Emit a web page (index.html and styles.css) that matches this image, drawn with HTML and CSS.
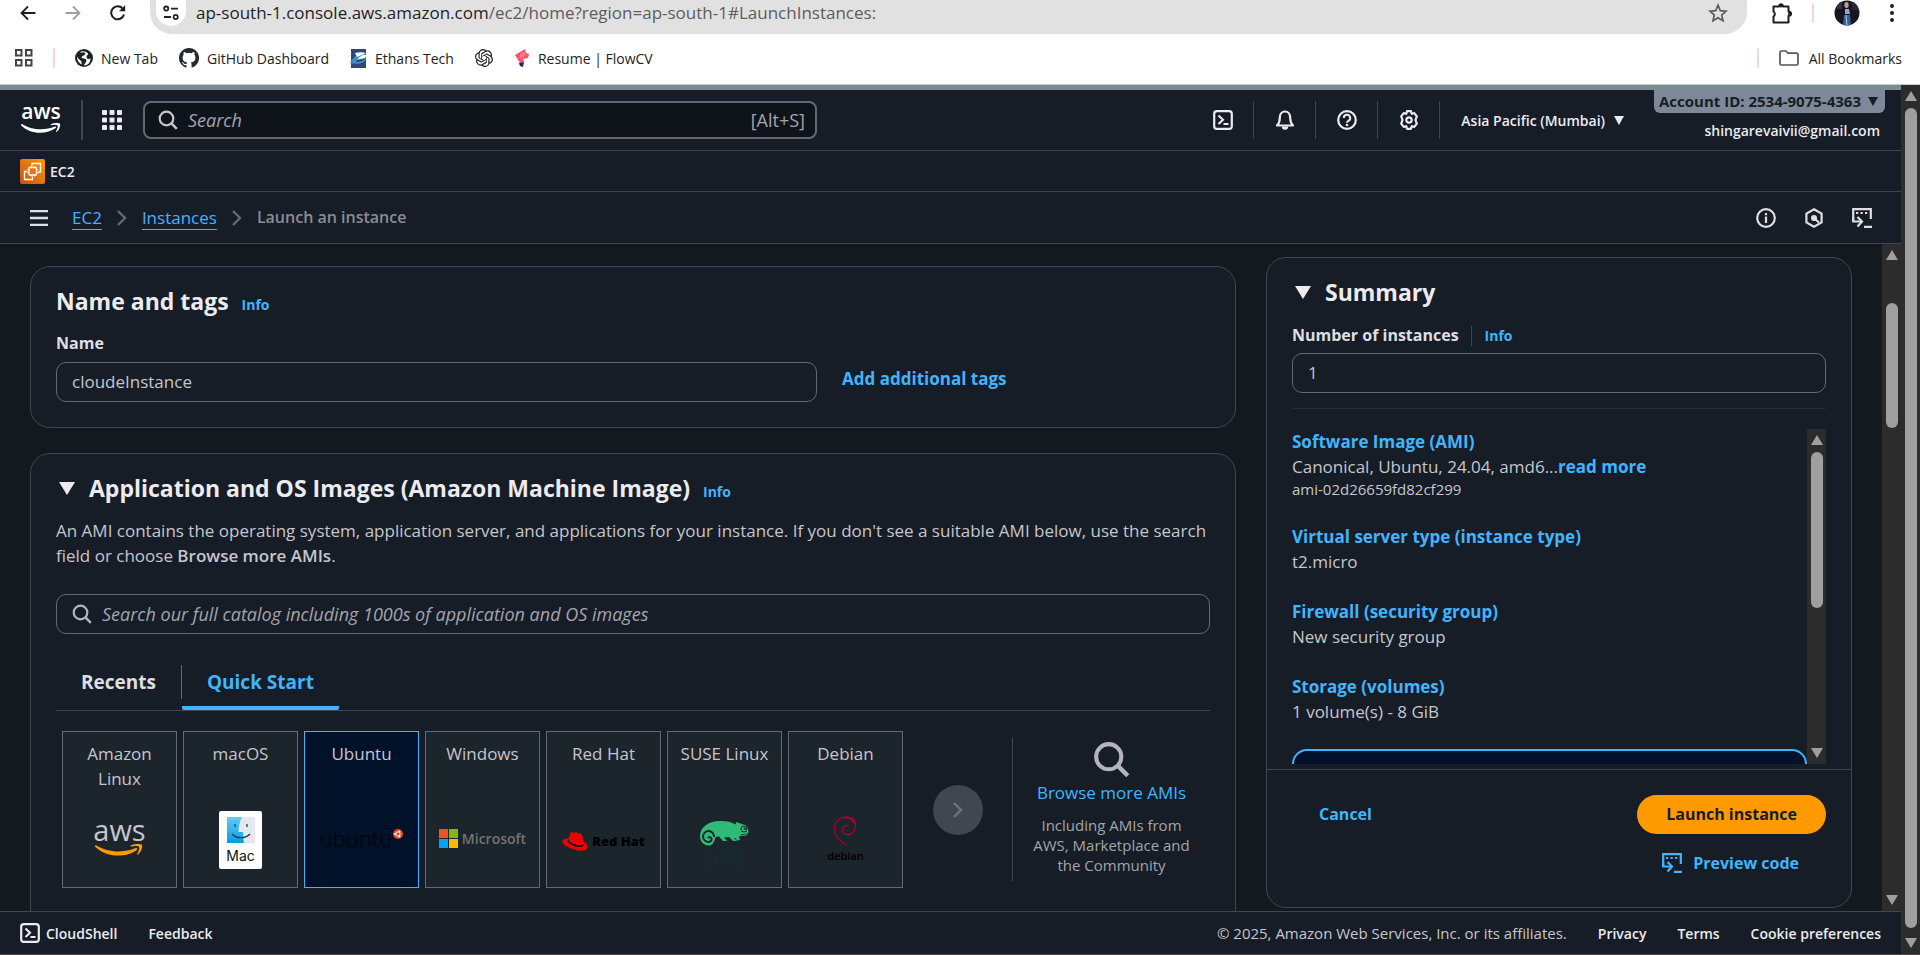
FILE: index.html
```html
<!DOCTYPE html>
<html lang="en">
<head>
<meta charset="utf-8">
<title>Launch an instance | EC2</title>
<link rel="stylesheet" href="styles.css">
</head>
<body>
<svg class="defs" aria-hidden="true">
  <defs>
    <symbol id="i-search" viewBox="0 0 20 20"><circle cx="8.500" cy="8.500" r="6.800" fill="none" stroke="currentColor" stroke-width="2.200"/><path d="M13.200 13.200l5.600 5.600" stroke="currentColor" stroke-width="2.400" fill="none"/></symbol>
    <symbol id="i-shell" viewBox="0 0 20 20"><rect x="1.2" y="1.2" width="17.6" height="17.6" rx="2.6" fill="none" stroke="currentColor" stroke-width="2.2"/><path d="M5.5 5.5l4.5 4.3-4.5 4.3M10.5 14h5" fill="none" stroke="currentColor" stroke-width="2.1"/></symbol>
    <symbol id="i-code" viewBox="0 0 20 20"><path d="M1.200 13V1.200h17.600V11" fill="none" stroke="currentColor" stroke-width="2.200"/><path d="M1.200 9.500v4h8" fill="none" stroke="currentColor" stroke-width="2.200"/><path d="M5.500 9l4.500 4.500L5.500 18.500" fill="none" stroke="currentColor" stroke-width="2.200"/><path d="M4 5h2.200M8.500 5h2.200M13 5h2.200M12 18.800h8" stroke="currentColor" stroke-width="2.200"/></symbol>
    <symbol id="i-chev" viewBox="0 0 10 18"><path d="M1 2l7 7-7 7" fill="none" stroke="currentColor" stroke-width="2.4"/></symbol>
    <symbol id="i-smile" viewBox="0 0 52 14"><path d="M0 2.200c0-1 1-1.200 1.800-.7C8 5.500 17 8 26 8c6 0 12.500-1.300 18-3.600 1.400-.5 2.500 1 1.200 2C40 10.500 32 12.500 25 12.500 15 12.500 6.500 8.800.5 3.300z" fill="currentColor"/><path d="M47.500 3c-1.600-1.500-6-1-8.500-.2-.8.100-.9-.6-.2-1.100C42.800-.9 49.800-.2 50.700.8c.8 1-.2 7.500-4.200 10.500-.6.500-1.200.2-.9-.4 1-2.300 3-6.400 1.900-7.900z" fill="currentColor"/></symbol>
  </defs>
</svg>

<div class="window">
  <header class="browser">
    <div class="toolbar">
      <nav class="history">
        <button aria-label="Back"><svg width="16" height="16" viewBox="0 0 16 16"><path d="M15.500 8H1.500M8 1.500L1.500 8 8 14.500" fill="none" stroke="#1f1f1f" stroke-width="1.800"/></svg></button>
        <button aria-label="Forward"><svg width="16" height="16" viewBox="0 0 16 16"><path d="M.5 8h14M8 1.500L14.500 8 8 14.500" fill="none" stroke="#a0a0a0" stroke-width="1.800"/></svg></button>
        <button aria-label="Reload"><svg width="16" height="16" viewBox="0 0 16 16"><path d="M14 9.500A6.500 6.500 0 1 1 13 4" fill="none" stroke="#1f1f1f" stroke-width="2"/><path d="M15.200 0v6.200H9z" fill="#1f1f1f"/></svg></button>
      </nav>
      <div class="omnibox">
        <button class="site" aria-label="Site information"><svg width="16" height="16" viewBox="0 0 16 16"><g fill="none" stroke="#222" stroke-width="1.800"><circle cx="3.200" cy="3.600" r="2.100"/><path d="M8 3.600h7M1 12h7"/><circle cx="12.700" cy="12" r="2.100"/></g></svg></button>
        <span class="url">ap-south-1.console.aws.amazon.com<span class="path">/ec2/home?region=ap-south-1#LaunchInstances:</span></span>
        <svg width="20" height="20" viewBox="0 0 20 20"><path d="M10 2.200l2.300 5.400 5.800.5-4.400 3.900 1.300 5.700-5-3-5 3L6.300 12 1.900 8.100l5.800-.5z" fill="none" stroke="#5c5c5c" stroke-width="1.700"/></svg>
      </div>
      <div class="extras">
        <svg width="20" height="22" viewBox="0 0 20 22"><path d="M1.500 4.500H7a2 2 0 0 1 4 0h5.500v5a2 2 0 0 1 0 4.500v6.500h-15v-6a3 3 0 0 0 0-5z" fill="none" stroke="#1f1f1f" stroke-width="2" stroke-linejoin="round"/><circle cx="9" cy="3.500" r="2" fill="#1f1f1f"/><circle cx="18" cy="11.700" r="2" fill="#1f1f1f"/></svg>
        <i class="pink"></i>
        <svg width="26" height="26" viewBox="0 0 26 26"><defs><clipPath id="av"><circle cx="13" cy="13" r="12.500"/></clipPath></defs><g clip-path="url(#av)"><rect width="26" height="26" fill="#17151f"/><path d="M2 0h6v9H3z" fill="#35304a"/><path d="M17 2h7v8h-6z" fill="#2a2638"/><ellipse cx="12.500" cy="5" rx="2.200" ry="3" fill="#c89c8c"/><path d="M11 9h4l1 5h-5z" fill="#8fa9cc"/><path d="M10 15h6l1 11H9z" fill="#32619c"/><path d="M12 15l1 11" stroke="#b6c8dd"/></g></svg>
        <svg class="kebab" width="6" height="20" viewBox="0 0 6 20" fill="#1f1f1f"><circle cx="3" cy="3" r="2"/><circle cx="3" cy="10" r="2"/><circle cx="3" cy="17" r="2"/></svg>
      </div>
    </div>
    <div class="bookmarks">
      <svg class="apps" width="18" height="18" viewBox="0 0 18 18" fill="none" stroke="#444" stroke-width="2"><rect x="1" y="1" width="5.500" height="5.500"/><rect x="11" y="1" width="5.500" height="5.500"/><rect x="1" y="11" width="5.500" height="5.500"/><rect x="11" y="11" width="5.500" height="5.500"/></svg>
      <i class="pink"></i>
      <a href="#"><svg width="18" height="18" viewBox="0 0 18 18"><circle cx="9" cy="9" r="9" fill="#202124"/><path d="M5 3c2 1.500 4-1 5 1s-2 2.500-3 3.500 0 2 2 2 3 1.500 2 3.500-2 2-2 3.500c4 0 6.500-3 6.500-7-2 1-4 .5-4-1.500s2-2 1.500-3.500C11 2 7 1.500 5 3zM2 7.500c0 4 2 6.500 4.500 8 .5-2 0-3-1-4S3 9.500 2 7.500z" fill="#fff"/></svg>New Tab</a>
      <a href="#"><svg width="20" height="20" viewBox="0 0 16 16"><path fill="#24292f" d="M8 0C3.580 0 0 3.580 0 8c0 3.540 2.290 6.530 5.470 7.590.4.070.55-.17.55-.38v-1.490c-2.010.37-2.530-.49-2.690-.94-.09-.23-.48-.94-.82-1.130-.28-.15-.68-.52-.01-.53.63-.01 1.080.58 1.230.82.72 1.210 1.870.87 2.330.66.070-.52.28-.87.51-1.070-1.780-.2-3.640-.89-3.640-3.950 0-.87.31-1.590.82-2.150-.08-.2-.36-1.020.08-2.120 0 0 .67-.21 2.200.82a7.600 7.600 0 0 1 4 0c1.530-1.040 2.200-.82 2.200-.82.44 1.100.16 1.920.08 2.120.51.560.82 1.270.82 2.150 0 3.070-1.870 3.750-3.650 3.950.29.250.54.730.54 1.480v2.200c0 .21.150.460.550.38A8 8 0 0 0 8 0z"/></svg>GitHub Dashboard</a>
      <a href="#"><svg width="17" height="19" viewBox="0 0 17 19"><path d="M1 0h15v6c-5-2-8 1-11 6 4-3 8-1 11-4v11H1z" fill="#2c4a78"/><path d="M0 14C4 7 9 4 16 5c-5 1-8 4-10 8 4 0 8-1 10-5 0 6-6 8-16 6z" fill="#3f8fc4"/><path d="M5 4c4-1 8-1 11 0L7 8z" fill="#fff"/></svg>Ethans Tech</a>
      <a href="#" aria-label="ChatGPT"><svg width="18" height="18" viewBox="0 0 24 24"><path fill="#222" d="M22.282 9.821a5.985 5.985 0 0 0-.516-4.910 6.046 6.046 0 0 0-6.510-2.900A6.065 6.065 0 0 0 4.981 4.182a5.985 5.985 0 0 0-3.998 2.900 6.046 6.046 0 0 0 .743 7.097 5.980 5.980 0 0 0 .510 4.911 6.051 6.051 0 0 0 6.515 2.900A5.985 5.985 0 0 0 13.260 24a6.056 6.056 0 0 0 5.772-4.206 5.990 5.990 0 0 0 3.998-2.900 6.056 6.056 0 0 0-.747-7.073zM13.260 22.430a4.476 4.476 0 0 1-2.876-1.040l.141-.081 4.779-2.758a.795.795 0 0 0 .392-.681v-6.737l2.020 1.168a.071.071 0 0 1 .038.052v5.583a4.504 4.504 0 0 1-4.494 4.494zM3.600 18.304a4.470 4.470 0 0 1-.535-3.014l.142.085 4.783 2.759a.771.771 0 0 0 .780 0l5.843-3.369v2.332a.080.080 0 0 1-.033.062L9.740 19.950a4.500 4.500 0 0 1-6.140-1.646zM2.340 7.896a4.485 4.485 0 0 1 2.366-1.973V11.600a.766.766 0 0 0 .388.676l5.815 3.355-2.020 1.168a.076.076 0 0 1-.071 0l-4.830-2.786A4.504 4.504 0 0 1 2.340 7.872zm16.597 3.855l-5.833-3.387L15.119 7.200a.076.076 0 0 1 .071 0l4.830 2.791a4.494 4.494 0 0 1-.676 8.105v-5.678a.790.790 0 0 0-.407-.667zm2.010-3.023l-.141-.085-4.774-2.782a.776.776 0 0 0-.785 0L9.409 9.230V6.897a.066.066 0 0 1 .028-.061l4.830-2.787a4.500 4.500 0 0 1 6.680 4.660zm-12.640 4.135l-2.020-1.164a.080.080 0 0 1-.038-.057V6.075a4.500 4.500 0 0 1 7.375-3.453l-.142.080L8.704 5.460a.795.795 0 0 0-.393.681zm1.097-2.365l2.602-1.500 2.607 1.500v2.999l-2.597 1.500-2.607-1.500z"/></svg></a>
      <a href="#"><svg width="16" height="18" viewBox="0 0 16 18"><path d="M1 6L11 0l1 4 3 1-1 4-5 1 1 3-4 1z" fill="#ff4f7b"/><path d="M6 5l6-3-1 5-5 3z" fill="#ff7b6b"/><path d="M5 14l5-1-1 5-3-1z" fill="#3b1564"/></svg>Resume | FlowCV</a>
      <i class="pink push"></i>
      <a href="#" class="all"><svg width="20" height="16" viewBox="0 0 20 16"><path d="M1 2.500Q1 1 2.500 1H7l2 2.200h8.500q1.500 0 1.500 1.500v8.800q0 1.500-1.500 1.500h-15Q1 15 1 13.500z" fill="none" stroke="#555" stroke-width="1.700"/></svg>All Bookmarks</a>
    </div>
  </header>

  <div class="tab-view">
    <div class="console">
      <div class="global-nav">
        <a href="#" class="aws-logo" aria-label="AWS home"><span>aws</span><svg width="40" height="11"><use href="#i-smile"/></svg></a>
        <i class="rule"></i>
        <button class="services" aria-label="Services"><svg width="20" height="20" viewBox="0 0 20 20" fill="currentColor"><rect width="5" height="5" rx="1"/><rect x="7.500" width="5" height="5" rx="1"/><rect x="15" width="5" height="5" rx="1"/><rect y="7.500" width="5" height="5" rx="1"/><rect x="7.500" y="7.500" width="5" height="5" rx="1"/><rect x="15" y="7.500" width="5" height="5" rx="1"/><rect y="15" width="5" height="5" rx="1"/><rect x="7.500" y="15" width="5" height="5" rx="1"/><rect x="15" y="15" width="5" height="5" rx="1"/></svg></button>
        <label class="nav-search"><svg width="20" height="20"><use href="#i-search"/></svg><input type="search" placeholder="Search" aria-label="Search"><span>[Alt+S]</span></label>
        <div class="nav-tools">
          <button aria-label="CloudShell"><svg width="20" height="20"><use href="#i-shell"/></svg></button>
          <button aria-label="Notifications"><svg width="20" height="20" viewBox="0 0 20 20"><path d="M2 15.500c2-2 2.800-3.500 2.800-7.500C4.800 4 7 1.500 10 1.500S15.200 4 15.200 8c0 4 .8 5.500 2.800 7.500z" fill="none" stroke="currentColor" stroke-width="2.200" stroke-linejoin="round"/><path d="M6.800 16.500a3.200 3.200 0 0 0 6.400 0z" fill="currentColor"/></svg></button>
          <button aria-label="Help"><svg width="20" height="20" viewBox="0 0 20 20"><circle cx="10" cy="10" r="8.800" fill="none" stroke="currentColor" stroke-width="2.200"/><path d="M6.800 8a3.200 3.200 0 1 1 4.600 2.800c-1 .5-1.400 1-1.400 1.900" fill="none" stroke="currentColor" stroke-width="2"/><circle cx="10" cy="15" r="1.300" fill="currentColor"/></svg></button>
          <button aria-label="Settings"><svg width="20" height="20" viewBox="0 0 20 20"><path d="M8 1.200h4l.7 2.600 2.600-.7 2.500 3.300L16.500 10l1.300 3.600-2.500 3.300-2.600-.7-.7 2.600H8l-.7-2.600-2.600.7-2.500-3.300L3.500 10 2.200 6.400l2.500-3.300 2.600.7z" fill="none" stroke="currentColor" stroke-width="2.200" stroke-linejoin="round"/><circle cx="10" cy="10" r="2.700" fill="none" stroke="currentColor" stroke-width="2.200"/></svg></button>
        </div>
        <button class="region">Asia Pacific (Mumbai) <i class="caret"></i></button>
        <div class="account">
          <button class="account-id">Account ID: 2534-9075-4363 <i class="caret"></i></button>
          <span>shingarevaivii@gmail.com</span>
        </div>
      </div>
      <div class="favorites">
        <a href="#"><svg width="25" height="25" viewBox="0 0 25 25"><defs><linearGradient id="og" x1="0" y1="1" x2="1" y2="0"><stop stop-color="#c8511b"/><stop offset="1" stop-color="#f90"/></linearGradient></defs><rect width="25" height="25" rx="2" fill="url(#og)"/><g fill="none" stroke="#fff" stroke-width="1.300"><path d="M7.500 12.500H4.500v8h8v-3M12 7V4.500h8.500V13H18"/><rect x="9" y="8.500" width="7.500" height="7.500" rx=".8"/><path d="M11 8.500V7M14.500 8.500V7M11 17.500V16M14.500 17.500V16M7.500 10.500H9M7.500 14H9M16.500 10.500H18M16.500 14H18" stroke-width="1"/></g></svg>EC2</a>
      </div>
      <div class="crumbs">
        <button class="burger" aria-label="Menu"><svg width="18" height="16" viewBox="0 0 18 16"><path d="M0 1.200h18M0 8h18M0 14.800h18" stroke="currentColor" stroke-width="2.300"/></svg></button>
        <a href="#">EC2</a><svg width="10" height="18"><use href="#i-chev"/></svg>
        <a href="#">Instances</a><svg width="10" height="18"><use href="#i-chev"/></svg>
        <span>Launch an instance</span>
        <div class="crumb-tools">
          <button aria-label="Info"><svg width="20" height="20" viewBox="0 0 20 20"><circle cx="10" cy="10" r="8.800" fill="none" stroke="currentColor" stroke-width="2.200"/><path d="M10 8.500V15M10 5v2.200" stroke="currentColor" stroke-width="2.200"/></svg></button>
          <button aria-label="Tutorials"><svg width="20" height="20" viewBox="0 0 20 20"><path d="M10 1.300l7.600 4.300v8.800L10 18.700l-7.600-4.300V5.600z" fill="none" stroke="currentColor" stroke-width="2.200"/><path d="M10 10l5 4.500" stroke="currentColor" stroke-width="2.200"/><circle cx="10" cy="10" r="3" fill="currentColor"/></svg></button>
          <button aria-label="Preview code"><svg width="20" height="20"><use href="#i-code"/></svg></button>
        </div>
      </div>

      <div class="body">
        <main class="content">
          <div class="forms">
            <section class="card">
              <h2>Name and tags <a href="#" class="info">Info</a></h2>
              <label class="field-label name-label" for="name">Name</label>
              <div class="name-row">
                <input id="name" class="text-input" type="text" value="cloudeInstance">
                <a href="#" class="link">Add additional tags</a>
              </div>
            </section>
            <section class="card ami">
              <h2><i class="caret big"></i>Application and OS Images (Amazon Machine Image) <a href="#" class="info">Info</a></h2>
              <p class="lead">An AMI contains the operating system, application server, and applications for your instance. If you don't see a suitable AMI below, use the search field or choose <b>Browse more AMIs</b>.</p>
              <label class="catalog"><svg width="20" height="20"><use href="#i-search"/></svg><input type="search" aria-label="Search catalog" placeholder="Search our full catalog including 1000s of application and OS images"></label>
              <div class="tabs" role="tablist">
                <button role="tab">Recents</button>
                <i class="tab-rule"></i>
                <button role="tab" class="active" aria-selected="true">Quick Start</button>
              </div>
              <div class="quick">
                <div class="tiles">
                  <button class="tile"><span>Amazon Linux</span><div class="logo aws-tile"><span>aws</span><svg width="52" height="13"><use href="#i-smile"/></svg></div></button>
                  <button class="tile"><span>macOS</span><div class="logo mac"><svg width="28" height="26" viewBox="0 0 28 26"><defs><linearGradient id="mb" x2="0" y2="1"><stop stop-color="#62cdf6"/><stop offset="1" stop-color="#069be0"/></linearGradient></defs><rect width="28" height="26" rx="1" fill="#e4e8f0"/><path d="M0 0h15c-2 4-3.500 9-3.500 15H16c0 4 .3 8 1 11H0z" fill="url(#mb)"/><path d="M8 7v3M20 7v3M5 17c5 5 13 5 18 0" fill="none" stroke="#173452" stroke-width="1.200"/></svg><span>Mac</span></div></button>
                  <button class="tile selected" aria-pressed="true"><span>Ubuntu</span><div class="logo ubuntu"><span>ubuntu</span><svg width="10" height="10" viewBox="0 0 10 10"><circle cx="5" cy="5" r="5" fill="#dd4b22"/><circle cx="5" cy="5" r="2.200" fill="none" stroke="#fff" stroke-width="1"/><g fill="#fff"><circle cx="2" cy="5" r=".9"/><circle cx="6.500" cy="2.400" r=".9"/><circle cx="6.500" cy="7.600" r=".9"/></g></svg></div></button>
                  <button class="tile"><span>Windows</span><div class="logo ms"><svg width="19" height="19" viewBox="0 0 19 19"><path d="M0 0h9v9H0z" fill="#f25022"/><path d="M10 0h9v9h-9z" fill="#7fba00"/><path d="M0 10h9v9H0z" fill="#00a4ef"/><path d="M10 10h9v9h-9z" fill="#ffb900"/></svg><span>Microsoft</span></div></button>
                  <button class="tile"><span>Red Hat</span><div class="logo rh"><svg width="26" height="20" viewBox="0 0 26 20"><path d="M.5 10C0 7 3 6 6.500 6.500L8 1.500C8.500 0 10 0 11 .5c1.500.7 2.500-.7 4 0l4 1.500c1 .5 1.400 1.500 1.700 3l1 5c3 1 4 3 3.800 5-.5 4-7 5-13 2.500C6 15.500 1 13 .5 10z" fill="#e00"/><path d="M6 7c1 3 4.500 5 9 6 3 .6 6 .3 6.500-1.500l.5 1.700c-1 2-5 2-9 1C8.500 13 5 10.500 5.500 8z" fill="#000"/></svg><span>Red Hat</span></div></button>
                  <button class="tile"><span>SUSE Linux</span><div class="logo suse"><svg width="49" height="26" viewBox="0 0 49 26"><path d="M36 3.500V1l9 3c2 .7 3 3 3.500 6 .2 2-1 4-2.500 4.500-2 .5-5 0-7 1l1 3.500-3 .5-1.500-2.500H34l3 3h-4l-4-4-5 .5 3 3.500h-4l-4-4.500c-2 0-3 0-4 2C14 22 12 25 8 24.500 3 24 0 20 0 15 0 6 9 0 20 0c7 0 11 1 16 3.500z" fill="#30ba78"/><path d="M14 16a5.500 5.500 0 1 0-5 5c2-.5 3-2 2.500-3.500S8.500 16 8 17" fill="none" stroke="#1c242c" stroke-width="1.900"/><circle cx="44" cy="8" r="3" fill="none" stroke="#1c242c" stroke-width="1"/><circle cx="44.800" cy="7.600" r="1.200" fill="#1c242c"/><path d="M41 13.500c3 .4 5 0 7-1.500" fill="none" stroke="#1c242c" stroke-width=".8"/></svg><span>SUSE</span></div></button>
                  <button class="tile"><span>Debian</span><div class="logo deb"><svg width="24" height="30" viewBox="0 0 24 30"><path d="M13 29C6 24 .5 19 1.500 11 2.500 4 8 .5 14 1.200c6 .8 9 5 8.500 10-.4 5-4.500 8-8.500 7.500-4-.4-5.500-4-4-7 1-2 4-3 6-1.500" fill="none" stroke="#a80030" stroke-width="1.300"/><path d="M10 2c5-1.500 11 .5 12 6" fill="none" stroke="#a80030" stroke-width="2.200"/></svg><span>debian</span></div></button>
                </div>
                <div class="next"><button aria-label="Next"><svg width="10" height="18"><use href="#i-chev"/></svg></button></div>
                <div class="browse">
                  <svg width="37" height="37"><use href="#i-search"/></svg>
                  <a href="#">Browse more AMIs</a>
                  <p>Including AMIs from AWS, Marketplace and the Community</p>
                </div>
              </div>
            </section>
          </div>

          <aside class="card summary">
            <div class="summary-top">
              <h2><i class="caret big"></i>Summary</h2>
              <div class="count-label"><label class="field-label" for="count">Number of instances</label><a href="#" class="info">Info</a></div>
              <input id="count" class="text-input" type="text" value="1">
              <hr>
              <div class="details">
                <dl>
                  <dt><a href="#">Software Image (AMI)</a></dt>
                  <dd>Canonical, Ubuntu, 24.04, amd6...<a href="#">read more</a></dd>
                  <dd class="small">ami-02d26659fd82cf299</dd>
                  <dt><a href="#">Virtual server type (instance type)</a></dt>
                  <dd>t2.micro</dd>
                  <dt><a href="#">Firewall (security group)</a></dt>
                  <dd>New security group</dd>
                  <dt><a href="#">Storage (volumes)</a></dt>
                  <dd>1 volume(s) - 8 GiB</dd>
                  <dd class="notice"></dd>
                </dl>
                <div class="scrollbar"><i class="up"></i><i class="thumb thumb-details"></i><i class="down"></i></div>
              </div>
            </div>
            <div class="actions">
              <a href="#" class="link cancel">Cancel</a>
              <div class="buttons">
                <button class="launch">Launch instance</button>
                <button class="preview"><svg width="20" height="20"><use href="#i-code"/></svg>Preview code</button>
              </div>
            </div>
          </aside>
        </main>
        <div class="scrollbar"><i class="up"></i><i class="thumb thumb-content"></i><i class="down"></i></div>
      </div>

      <footer class="footer">
        <button><svg width="20" height="20"><use href="#i-shell"/></svg>CloudShell</button>
        <a href="#" class="feedback">Feedback</a>
        <span class="copy">© 2025, Amazon Web Services, Inc. or its affiliates.</span>
        <a href="#">Privacy</a>
        <a href="#">Terms</a>
        <a href="#">Cookie preferences</a>
      </footer>
    </div>
    <div class="scrollbar"><i class="up"></i><i class="thumb thumb-page"></i><i class="down"></i></div>
  </div>
</div>
</body>
</html>
```
FILE: styles.css
```css
* { box-sizing: border-box; }
body { margin: 0; font: 17px/25px "Open Sans", "Noto Sans", sans-serif; color: #c6c6cd; background: #161d26; }
button, input { font: inherit; color: inherit; background: none; border: 0; padding: 0; margin: 0; outline: 0; }
button { display: flex; align-items: center; cursor: pointer; white-space: nowrap; }
input[type="search"] { appearance: none; }
a { color: #42b4ff; text-decoration: none; }
b { font-weight: 600; }
svg { flex: none; display: block; }
h2, p, dl, dd { margin: 0; }
.defs { position: absolute; width: 0; height: 0; }
.window { height: 100vh; display: flex; flex-direction: column; overflow: hidden; border-bottom: 1px solid #54443f; }

/* Browser chrome */
.browser { background: #fff; border-bottom: 1px solid #c3cdc9; color: #222; }
.toolbar { height: 34px; display: flex; }
.history { height: 26px; display: flex; gap: 29px; padding: 0 24px 0 20px; align-items: center; }
.omnibox { flex: 1; height: 34px; background: #e1e1e1; border-radius: 0 0 22px 22px; display: flex; align-items: center; padding: 0 19px 8px 6px; gap: 10px; }
.site { width: 30px; height: 26px; border-radius: 0 0 15px 15px; background: #fff; justify-content: center; }
.url { flex: 1; line-height: 24px; color: #1f1f1f; }
.path { color: #5c5c5c; }
.extras { height: 26px; display: flex; align-items: center; gap: 20px; padding: 0 25px; }
.kebab { margin-left: 9px; }
.pink { width: 2px; height: 20px; border-radius: 1px; background: #f5d3e3; }
.bookmarks { height: 50px; display: flex; align-items: center; padding: 0 18px 2px 15px; font-size: 14px; }
.bookmarks .pink { margin: 0 20px; }
.bookmarks .pink.push { margin-left: auto; }
.bookmarks a { display: flex; align-items: center; gap: 8px; color: #222; margin-right: 21px; }
.bookmarks a.all { gap: 10px; margin: 0; }

/* Scrollbars */
.tab-view { flex: 1; min-height: 0; display: flex; }
.scrollbar { flex: none; width: 19px; background: #2c2c2c; display: flex; flex-direction: column; align-items: center; padding: 6px 0; }
.up, .down { border: 6px solid transparent; width: 0; height: 0; }
.up { border-top: 0; border-bottom: 10px solid #9f9f9f; }
.down { border-bottom: 0; border-top: 10px solid #9f9f9f; margin-top: auto; }
.thumb { width: 12px; border-radius: 6px; background: #9f9f9f; margin-top: 7px; }
.thumb-page { flex: 1; margin-bottom: 10px; }
.thumb-content { height: 125px; margin-top: 43px; }
.thumb-details { height: 156px; }

/* Navigation */
.console { flex: 1; min-width: 0; display: flex; flex-direction: column; border-top: 5px solid #7a8b94; }
.global-nav { height: 61px; flex: none; display: flex; align-items: center; border-bottom: 1px solid #424650; padding: 0 16px 0 21px; color: #ebebf0; }
.aws-logo { width: 40px; color: #fff; text-align: center; font-size: 21px; font-weight: 600; }
.aws-logo span { display: block; height: 16px; line-height: 9px; }
.rule { width: 2px; height: 40px; background: #424650; margin: 0 19px 0 20px; }
.nav-search { width: 674px; height: 38px; margin-left: 21px; border: 2px solid #656871; border-radius: 8px; background: #0f141a; display: flex; align-items: center; gap: 10px; padding: 0 10px 0 13px; color: #c6c6cd; font-size: 18px; }
.nav-search input { flex: 1; min-width: 0; }
.nav-search span { color: #a4a4ad; }
::placeholder { color: #a4a4ad; opacity: 1; font-style: italic; }
.nav-tools { margin-left: auto; display: flex; }
.nav-tools button { width: 62px; height: 38px; justify-content: center; border-right: 1px solid #424650; }
.region { font-size: 14px; font-weight: 600; margin: 0 30px 0 21px; gap: 9px; }
.caret { display: inline-block; border: 5px solid transparent; border-bottom: 0; border-top: 9px solid currentColor; }
.caret.big { border-width: 13px 8px 0; margin: 0 14px 0 3px; align-self: center; }
.account { align-self: stretch; display: flex; flex-direction: column; align-items: flex-end; font-size: 14px; font-weight: 600; }
.account-id { height: 23px; background: #7d8998; color: #161d26; padding: 0 7px 0 5px; border-radius: 0 0 6px 6px; gap: 7px; font-size: 15px; font-weight: 700; }
.account span { line-height: 20px; padding: 8px 5px 0 0; }
.favorites { height: 41px; flex: none; display: flex; align-items: center; border-bottom: 1px solid #424650; padding-left: 20px; }
.favorites a { display: flex; align-items: center; gap: 5px; color: #ebebf0; font-size: 14px; font-weight: 600; }
.crumbs { height: 52px; flex: none; display: flex; align-items: center; gap: 15px; border-bottom: 1px solid #424650; padding: 0 29px 0 30px; color: #656871; }
.crumbs a { text-decoration: underline; text-underline-offset: 5px; text-decoration-thickness: 1px; }
.crumbs > span { color: #8c8c94; font-size: 16px; font-weight: 600; }
.burger { color: #dedee3; margin-right: 9px; }
.crumb-tools { margin-left: auto; display: flex; gap: 28px; color: #dedee3; }

/* Content */
.body { flex: 1; min-height: 0; display: flex; }
.content { flex: 1; min-width: 0; overflow: hidden; background: #12191f; display: grid; grid-template-columns: minmax(0, 1206fr) minmax(0, 586fr); gap: 30px; align-items: start; padding: 13px 30px 0; }
.forms { display: flex; flex-direction: column; gap: 25px; padding-top: 9px; }
.card { background: #161d26; border: 1px solid #424650; border-radius: 20px; padding: 19px 25px 25px; }
h2 { font-size: 23px; line-height: 30px; color: #ebebf0; font-weight: 700; display: flex; align-items: baseline; }
.info { font-size: 14px; line-height: 20px; font-weight: 700; margin-left: 13px; }
.field-label { display: block; font-size: 16px; font-weight: 700; color: #dedee3; }
.name-label { margin: 15px 0 6px; }
.text-input { width: 100%; height: 40px; border: 1px solid #656871; border-radius: 10px; padding: 0 15px 2px; }
.name-row { display: grid; grid-template-columns: minmax(0, 761fr) minmax(0, 368fr); gap: 25px; }
.link { font-weight: 700; line-height: 34px; }
.ami { padding-bottom: 60px; }
.lead { padding-top: 15px; }
.catalog { display: flex; align-items: center; gap: 10px; height: 40px; margin-top: 26px; padding: 0 15px; border: 1px solid #656871; border-radius: 10px; color: #b4b4bb; font-size: 18px; }
.catalog input { flex: 1; }
.tabs { display: flex; align-items: flex-end; height: 77px; border-bottom: 1px solid #424650; }
.tabs button { height: 57px; padding: 6px 25px 0; font-size: 19px; font-weight: 700; color: #dedee3; border-bottom: 4px solid transparent; }
.tabs .active { color: #42b4ff; border-bottom-color: #42b4ff; border-radius: 2px; }
.tab-rule { width: 1px; height: 34px; background: #656871; margin-bottom: 11px; }
.quick { display: flex; align-items: center; padding: 20px 0 0 6px; }
.tiles { display: flex; gap: 6px; }
.tile { width: 115px; height: 157px; background: #1c242c; border: 1px solid #656871; padding: 9px 9px 0; flex-direction: column; white-space: normal; line-height: 25px; }
.tile.selected { background: #001129; border-color: #42b4ff; }
.tile > span { height: 50px; }
.logo { height: 95px; flex: none; display: flex; align-items: center; justify-content: center; }
.aws-tile { flex-direction: column; color: #f90; padding-bottom: 6px; }
.aws-tile span { color: #c6c6cd; font-size: 29px; line-height: 29px; }
.mac { background: #fff; height: 58px; width: 43px; margin-top: 20px; border-radius: 2px; flex-direction: column; color: #111; font-size: 14px; line-height: 20px; font-family: Inter, sans-serif; padding-top: 3px; gap: 3px; }
.ubuntu { color: #000; font-size: 22px; font-weight: 300; gap: 1px; }
.ubuntu svg { margin-bottom: 10px; }
.ms { color: #737373; font-size: 14px; font-weight: 600; gap: 4px; }
.rh { color: #000; font-size: 13px; font-weight: 800; gap: 4px; white-space: nowrap; padding-top: 6px; }
.suse { flex-direction: column; color: #0c322c; font-size: 18px; line-height: 18px; gap: 2px; padding-top: 10px; }
.deb { flex-direction: column; color: #000; font-size: 11px; font-weight: 600; line-height: 14px; gap: 3px; padding-top: 2px; }
.next { flex: 1; display: flex; justify-content: center; }
.next button { width: 50px; height: 50px; border-radius: 50%; background: #424650; color: #70737d; justify-content: center; }
.browse { width: 198px; height: 143px; border-left: 1px solid #424650; display: flex; flex-direction: column; align-items: center; padding-top: 3px; color: #b4b4bb; text-align: center; }
.browse a { line-height: 25px; padding-top: 2px; }
.browse p { width: 170px; font-size: 15px; line-height: 20px; padding-top: 10px; color: #a4a4ad; }

/* Summary */
.summary { padding: 0; }
.summary-top { padding: 19px 25px 5px; border-bottom: 1px solid #424650; }
.count-label { display: flex; align-items: center; padding: 16px 0 5px; }
.count-label .info { margin-left: 12px; padding-left: 13px; border-left: 1px solid #424650; }
hr { border: 0; border-top: 1px solid #232b37; margin: 15px 0 20px; }
.details { display: flex; height: 335px; overflow: hidden; }
dl { flex: 1; min-width: 0; }
dt { font-weight: 700; }
dt:not(:first-child) { padding-top: 25px; }
dd a { font-weight: 700; }
.small { font-size: 15px; line-height: 20px; }
.notice { height: 60px; margin-top: 25px; border: 2px solid #42b4ff; border-radius: 15px; background: #001129; }
.actions { display: flex; justify-content: space-between; align-items: flex-start; padding: 25px 25px 24px 52px; }
.cancel { font-size: 16px; line-height: 38px; }
.buttons { display: flex; flex-direction: column; align-items: flex-end; gap: 9px; font-size: 16px; font-weight: 700; }
.launch { height: 39px; padding: 0 29px; border-radius: 20px; background: #f90; color: #161d26; }
.preview { height: 40px; padding: 0 27px; gap: 11px; color: #42b4ff; }

/* Footer */
.footer { height: 43px; flex: none; display: flex; align-items: center; gap: 31px; border-top: 1px solid #424650; padding: 0 20px; font-size: 14px; }
.footer button { gap: 6px; font-weight: 600; color: #ebebf0; }
.footer a { color: #ebebf0; font-weight: 600; }
.copy { margin-left: auto; font-size: 15px; }
```
